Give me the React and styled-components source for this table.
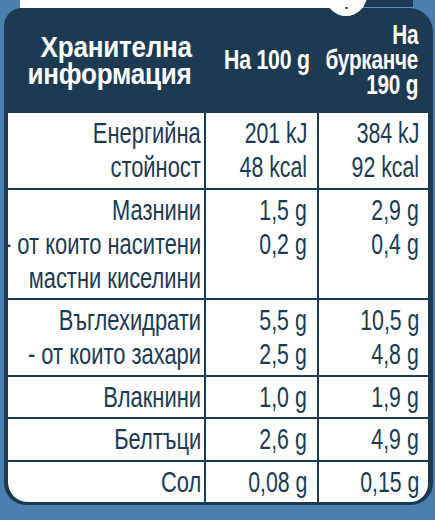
import React from "react";
import styled, { createGlobalStyle } from "styled-components";

const GlobalStyle = createGlobalStyle`
  html, body {
    margin: 0;
    padding: 0;
    background: #4c7fb0;
  }
`;

const navy = "#1c3a52";

const rows = [
  { label: ["Енергийна", "стойност"], per100: ["201 kJ", "48 kcal"], perJar: ["384 kJ", "92 kcal"] },
  {
    label: ["Мазнини", "- от които наситени", "мастни киселини"],
    per100: ["1,5 g", "0,2 g"],
    perJar: ["2,9 g", "0,4 g"],
  },
  { label: ["Въглехидрати", "- от които захари"], per100: ["5,5 g", "2,5 g"], perJar: ["10,5 g", "4,8 g"] },
  { label: ["Влакнини"], per100: ["1,0 g"], perJar: ["1,9 g"] },
  { label: ["Белтъци"], per100: ["2,6 g"], perJar: ["4,9 g"] },
  { label: ["Сол"], per100: ["0,08 g"], perJar: ["0,15 g"] },
];

// the label font is a narrow one, so each line is squeezed sideways from its right edge
const Lines = ({ items, scale }) =>
  items.map((t) => (
    <Line key={t}>
      <Squeeze $scale={scale}>{t}</Squeeze>
    </Line>
  ));

const App = () => {
  return (
    <Page>
      <GlobalStyle />
      <Lid>
        <LidWhite />
        <LidDark />
      </Lid>
      <Notch />
      <Panel>
        <Table>
          <HeadCell $pad={12} $size={30} $lh={27}>
            <Lines items={["Хранителна", "информация"]} scale={0.87} />
          </HeadCell>
          <HeadCell $pad={7}>
            <Lines items={["На 100 g"]} scale={0.76} />
          </HeadCell>
          <HeadCell $pad={10}>
            <Lines items={["На", "бурканче", "190 g"]} scale={0.74} />
          </HeadCell>
          {rows.map((row, i) => {
            const last = i === rows.length - 1;
            return (
              <React.Fragment key={i}>
                <Cell $pad={3} $corner={last ? "left" : null}>
                  <Lines items={row.label} scale={0.73} />
                </Cell>
                <Cell $pad={10}>
                  <Lines items={row.per100} scale={0.71} />
                </Cell>
                <Cell $pad={9} $corner={last ? "right" : null}>
                  <Lines items={row.perJar} scale={0.71} />
                </Cell>
              </React.Fragment>
            );
          })}
        </Table>
      </Panel>
    </Page>
  );
};

const Page = styled.div`
  position: relative;
  width: 435px;
  height: 520px;
  overflow: hidden;
  background: #4c7fb0;
`;

const Lid = styled.div`
  display: flex;
  height: 8px;
  margin: 0 22px 0 20px;
`;

const LidWhite = styled.div`
  width: 310px;
  background: #ffffff;
`;

const LidDark = styled.div`
  flex: 1;
  margin-left: 30px;
  background: ${navy};
  border-bottom: 1px solid #5a8cbc;
  box-sizing: border-box;
`;

const Notch = styled.div`
  position: absolute;
  left: 325px;
  top: -26px;
  width: 42px;
  height: 42px;
  border-radius: 50%;
  background: #ffffff;
  z-index: 2;
  &::after {
    content: "";
    position: absolute;
    left: 20px;
    top: 33px;
    width: 3px;
    height: 2px;
    border-radius: 50%;
    background: ${navy};
  }
`;

const Panel = styled.div`
  margin: 0 2px 0 4px;
  padding: 0 5px 3px 4px;
  background: ${navy};
  border-radius: 18px 24px 22px 22px;
`;

const Table = styled.div`
  display: grid;
  grid-template-columns: 196px 111px 109px;
  gap: 2px;
  font-family: "Liberation Sans", Arial, sans-serif;
`;

const HeadCell = styled.div`
  height: 103px;
  display: flex;
  flex-direction: column;
  justify-content: center;
  padding-right: ${(p) => p.$pad}px;
  color: #ffffff;
  font-weight: 700;
  font-size: ${(p) => p.$size || 28}px;
  line-height: ${(p) => p.$lh || 25}px;
  letter-spacing: -0.3px;
`;

const Cell = styled.div`
  background: #ffffff;
  color: ${navy};
  padding: 3px ${(p) => p.$pad}px 3.5px 0;
  font-size: 30px;
  line-height: 34px;
  border-bottom-left-radius: ${(p) => (p.$corner === "left" ? "20px" : "0")};
  border-bottom-right-radius: ${(p) => (p.$corner === "right" ? "18px" : "0")};
`;

const Line = styled.div`
  display: flex;
  justify-content: flex-end;
`;

const Squeeze = styled.span`
  display: inline-block;
  white-space: nowrap;
  transform: scaleX(${(p) => p.$scale});
  transform-origin: right center;
`;

export default App;
